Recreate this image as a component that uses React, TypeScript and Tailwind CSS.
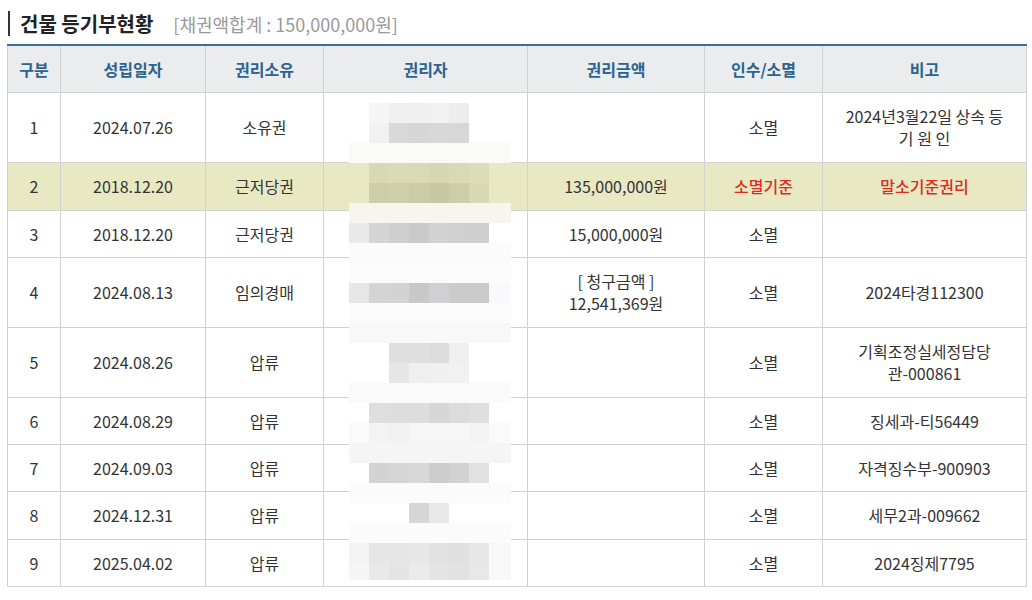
import React from "react";

/* ---------------------------------- data ---------------------------------- */
type Row = {
  no: number;
  date: string;
  kind: string;
  amount: string;
  status: string;
  note: string;
  h: string;
  base?: boolean;
};

const rows: Row[] = [
  { no: 1, date: "2024.07.26", kind: "소유권", amount: "", status: "소멸", note: "2024년3월22일 상속 등\n기 원 인", h: "h-[70px]" },
  { no: 2, date: "2018.12.20", kind: "근저당권", amount: "135,000,000원", status: "소멸기준", note: "말소기준권리", h: "h-[48px]", base: true },
  { no: 3, date: "2018.12.20", kind: "근저당권", amount: "15,000,000원", status: "소멸", note: "", h: "h-[47px]" },
  { no: 4, date: "2024.08.13", kind: "임의경매", amount: "[ 청구금액 ]\n12,541,369원", status: "소멸", note: "2024타경112300", h: "h-[70px]" },
  { no: 5, date: "2024.08.26", kind: "압류", amount: "", status: "소멸", note: "기획조정실세정담당\n관-000861", h: "h-[70px]" },
  { no: 6, date: "2024.08.29", kind: "압류", amount: "", status: "소멸", note: "징세과-티56449", h: "h-[47px]" },
  { no: 7, date: "2024.09.03", kind: "압류", amount: "", status: "소멸", note: "자격징수부-900903", h: "h-[47px]" },
  { no: 8, date: "2024.12.31", kind: "압류", amount: "", status: "소멸", note: "세무2과-009662", h: "h-[48px]" },
  { no: 9, date: "2025.04.02", kind: "압류", amount: "", status: "소멸", note: "2024징제7795", h: "h-[47px]" },
];

const headers = ["구분", "성립일자", "권리소유", "권리자", "권리금액", "인수/소멸", "비고"];
const cols = ["w-[53px]", "w-[145px]", "w-[118px]", "w-[204px]", "w-[177px]", "w-[118px]", "w-[204px]"];

/* mosaic covering the 권리자 column (8 x 20px blocks per band) */
const W = "bg-[#fbfbfb]";
const mosaic: (string | null)[][] = [
  [null, "bg-[#f5f5f5]", "bg-[#efefef]", "bg-[#f0f0f0]", "bg-[#f1f1f1]", "bg-[#ededed]", null, null],
  [null, "bg-[#f1f1f1]", "bg-[#d9d9d9]", "bg-[#d6d6d6]", "bg-[#d8d8d8]", "bg-[#d7d7d7]", null, null],
  Array(8).fill("bg-[#fafaf8]"),
  [null, "bg-[#d8d8b4]", "bg-[#dadab5]", "bg-[#d9d9b3]", "bg-[#d6d7b0]", "bg-[#d9dab4]", "bg-[#dcdcb8]", null],
  [null, "bg-[#cdcda9]", "bg-[#cfcfaa]", "bg-[#cbcba6]", "bg-[#c7c7a1]", "bg-[#cdcda8]", "bg-[#d7d8b4]", null],
  Array(8).fill("bg-[#f6f6ee]"),
  ["bg-[#e9e9e9]", "bg-[#d4d4d4]", "bg-[#cfcfcf]", "bg-[#c9c9c9]", "bg-[#d2d2d2]", "bg-[#d0d0d0]", "bg-[#cfcfcf]", null],
  Array(8).fill(W),
  Array(8).fill("bg-[#fcfcfc]"),
  ["bg-[#e7e7e7]", "bg-[#d4d4d4]", "bg-[#d3d3d3]", "bg-[#c8c8c8]", "bg-[#d0d0d3]", "bg-[#cbcbcb]", "bg-[#cbcbcb]", "bg-[#f9f9fb]"],
  Array(8).fill("bg-[#fcfcfc]"),
  Array(8).fill("bg-[#f8f8f8]"),
  [null, null, "bg-[#dfdfdf]", "bg-[#dfdfdf]", "bg-[#dcdcdc]", "bg-[#efefef]", null, null],
  [null, null, "bg-[#e6e6e6]", "bg-[#efefef]", "bg-[#f0f0f0]", "bg-[#f1f1f1]", null, null],
  Array(8).fill("bg-[#fafafa]"),
  [null, "bg-[#dedede]", "bg-[#dddddd]", "bg-[#dddddd]", "bg-[#d6d6d6]", "bg-[#dcdcdc]", "bg-[#dfdfdf]", null],
  ["bg-[#fafafa]", "bg-[#f3f3f3]", "bg-[#f1f1f1]", "bg-[#f6f6f6]", "bg-[#f6f6f6]", "bg-[#f6f6f6]", "bg-[#f3f3f3]", "bg-[#fafafa]"],
  Array(8).fill("bg-[#f5f5f5]"),
  [null, "bg-[#d3d3d3]", "bg-[#d5d5d5]", "bg-[#d8d8d8]", "bg-[#cdcdcd]", "bg-[#d2d2d2]", "bg-[#e2e2e2]", null],
  Array(8).fill(W),
  [null, null, null, "bg-[#d6d6d6]", "bg-[#e8e8e8]", null, null, null],
  Array(8).fill(W),
  ["bg-[#f4f3f3]", "bg-[#e6e6e6]", "bg-[#e5e5e5]", "bg-[#e7e7e7]", "bg-[#e2e2e2]", "bg-[#e0e0e0]", "bg-[#e7e7e7]", "bg-[#f8f8f8]"],
  ["bg-[#f5f5f5]", "bg-[#e9e9e9]", "bg-[#e4e4e4]", "bg-[#ebebeb]", "bg-[#e4e4e4]", "bg-[#e2e2e2]", "bg-[#e8e8e8]", "bg-[#f8f8f8]"],
];

function Mosaic() {
  return (
    <div className="absolute left-[342px] top-[59px] flex flex-col pointer-events-none">
      {mosaic.map((band, i) => (
        <div key={i} className={`flex ${i === mosaic.length - 1 ? "h-[17px]" : "h-[20px]"}`}>
          {band.map((c, j) => (
            <div key={j} className={`${j === 7 ? "w-[22px]" : "w-[20px]"} h-full ${c ?? ""}`} />
          ))}
        </div>
      ))}
    </div>
  );
}

/* ---------------------------------- page ---------------------------------- */
export default function App() {
  const cell = "border border-[#d2d2d2] text-center align-middle px-1";

  return (
    <div className="w-[1032px] h-[600px] bg-white font-['Noto_Sans_CJK_KR',sans-serif] text-[#333]">
      {/* TITLE */}
      <div className="flex items-center pt-[11px] pl-[8px] h-[36px]">
        <span className="w-[2px] h-[25px] bg-[#333]" />
        <h2 className="ml-[10px] text-[20px] font-bold text-[#222] leading-none">건물 등기부현황</h2>
        <span className="ml-[20px] text-[18px] text-[#999] leading-none">[채권액합계 : 150,000,000원]</span>
      </div>

      {/* TABLE */}
      <div className="relative ml-[7px] mt-[8px] w-[1020px]">
        <table className="table-fixed border-collapse w-[1020px] text-[16px]">
          <colgroup>
            {cols.map((c, i) => (
              <col key={i} className={c} />
            ))}
          </colgroup>
          <thead>
            <tr className="h-[47px] bg-[#eaecee]">
              {headers.map((h) => (
                <th
                  key={h}
                  className={`${cell} border-t-2 border-t-[#3b6e8f] font-bold text-[#2c6390]`}
                >
                  {h}
                </th>
              ))}
            </tr>
          </thead>
          <tbody>
            {rows.map((r) => (
              <tr key={r.no} className={`${r.h} ${r.base ? "bg-[#e8e9c3]" : "bg-white"}`}>
                <td className={cell}>{r.no}</td>
                <td className={cell}>{r.date}</td>
                <td className={cell}>{r.kind}</td>
                <td className={cell} />
                <td className={`${cell} whitespace-pre-line leading-[22px]`}>{r.amount}</td>
                <td className={`${cell} ${r.base ? "text-[#dd2a22] font-medium" : ""}`}>{r.status}</td>
                <td
                  className={`${cell} whitespace-pre-line leading-[22px] ${
                    r.base ? "text-[#dd2a22] font-medium" : ""
                  }`}
                >
                  {r.note}
                </td>
              </tr>
            ))}
          </tbody>
        </table>
        <Mosaic />
      </div>
    </div>
  );
}
